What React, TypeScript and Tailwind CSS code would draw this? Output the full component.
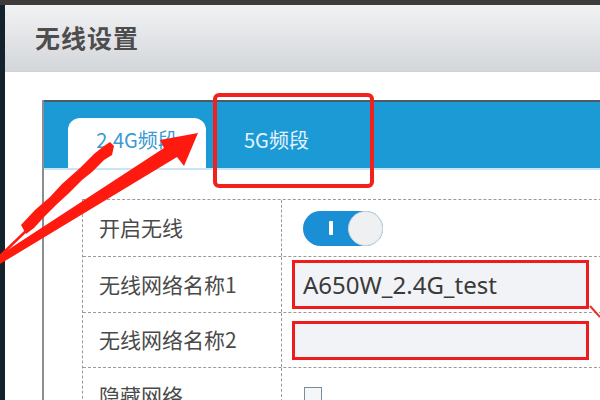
import React from "react";

const cjk = '"Noto Sans CJK SC", "Noto Sans", sans-serif';

const Row = ({ label, h, children }: { label: string; h: string; children?: React.ReactNode }) => (
  <div className={`flex ${h} border-b border-dashed border-[#9a9a9a]`}>
    <div className="w-[199px] shrink-0 flex items-center pl-[16px] text-[21px] text-[#4a4a4a] border-r border-dashed border-[#9a9a9a]">
      {label}
    </div>
    <div className="flex-1 flex items-center">{children}</div>
  </div>
);

const Arrows = () => (
  <svg className="absolute left-0 top-0 pointer-events-none" width="600" height="400" viewBox="0 0 600 400">
    {/* thick brush arrow */}
    <polygon
      fill="#ff1a0f"
      points="21,225 35,210 50,197 62,184 80,168 94,154 104,146 110,142 114,146 112,155 104,160 92,172 82,180 68,194 56,205 44,217 34,228 26,234"
    />
    <line x1="28" y1="229" x2="0" y2="256" stroke="#ff1a0f" strokeWidth="2.5" />
    {/* long arrow */}
    <polygon
      fill="#ff1a0f"
      points="0,255 164,148 160,140 198,133 184,166 177,157 0,264"
    />
    <line x1="590" y1="306" x2="600" y2="317" stroke="#e8312a" strokeWidth="2" />
  </svg>
);

export default function App() {
  return (
    <div className="relative w-[600px] h-[400px] overflow-hidden bg-white" style={{ fontFamily: cjk }}>
      <div className="h-[5px] bg-[#3d3c3a]" />
      <div className="flex h-[395px]">
        <div className="w-[5px] shrink-0 bg-[#14222b]" />
        <div className="flex-1 flex flex-col">
          <div className="h-[67px] shrink-0 bg-gradient-to-b from-[#f1f2f3] via-[#e2e4e7] to-[#d3d6da] flex items-center pl-[30px] border-b border-[#cfd3d7]">
            <span className="text-[25px] font-semibold text-[#4d4d4d] tracking-[1px]">无线设置</span>
          </div>
          <div className="pt-[28px] pl-[37px]">
            <div className="w-[600px] border-l-2 border-[#8a8f94]">
              <div className="h-[68px] bg-[#1c9ad6] border-t-2 border-[#4c5b66] flex items-end pl-[24px]">
                <div className="w-[138px] h-[50px] bg-white rounded-t-[12px] flex items-center justify-center pb-[6px] text-[20px] text-[#3a9ad3]">
                  2.4G频段
                </div>
                <div className="h-[50px] flex items-center pl-[38px] pb-[6px] text-[20px] text-[#e4f3fb]">
                  5G频段
                </div>
              </div>
              <div className="h-[2px] bg-[#c6e6f5]" />
              <div className="pt-[29px] pl-[38px]">
                <div className="border-t border-l border-dashed border-[#9a9a9a]">
                  <Row label="开启无线" h="h-[57px]">
                    <div className="ml-[21px] w-[80px] h-[35px] rounded-full bg-[#1b8fd6] relative flex items-center">
                      <div className="ml-[26px] w-[4px] h-[14px] bg-white rounded-[1px]" />
                      <div className="absolute right-0 top-0 w-[35px] h-[35px] rounded-full bg-[#eef0f2] border border-[#d4d7da]" />
                    </div>
                  </Row>
                  <Row label="无线网络名称1" h="h-[56px]">
                    <div className="ml-[10px] w-[297px] h-[49px] border-[3px] border-[#ee1c1c] bg-[#f1f3f6] flex items-center pl-[8px] text-[24px] text-[#3a3a3a]" style={{ fontFamily: '"Noto Sans", sans-serif' }}>
                      A650W_2.4G_test
                    </div>
                  </Row>
                  <Row label="无线网络名称2" h="h-[55px]">
                    <div className="ml-[10px] w-[297px] h-[39px] border-[3px] border-[#ee1c1c] bg-[#f1f3f6]" />
                  </Row>
                  <Row label="隐藏网络" h="h-[56px]">
                    <div className="ml-[22px] w-[18px] h-[18px] border border-[#7d8c9b] bg-[#f4f6f8]" />
                  </Row>
                </div>
              </div>
            </div>
          </div>
        </div>
      </div>
      <div className="absolute left-[213px] top-[93px] w-[161px] h-[95px] border-[4px] border-[#f2211b] rounded-[6px]" />
      <Arrows />
    </div>
  );
}
